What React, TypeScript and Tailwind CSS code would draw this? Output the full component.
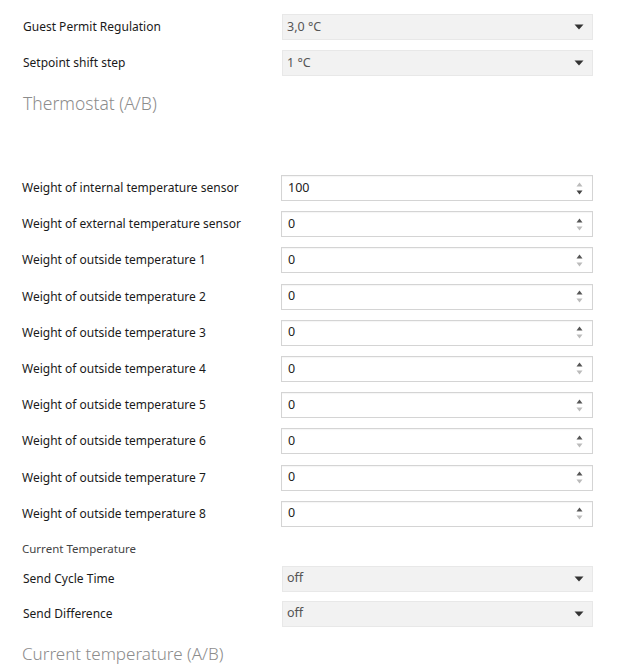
const font = "font-['Segoe_UI','Noto_Sans','Open_Sans',sans-serif]";

const Caret = () => (
  <svg width="10" height="6" viewBox="0 0 10 6" className="shrink-0">
    <path d="M0.5 0.5h9L5 5.5z" fill="#333" />
  </svg>
);

const Spinner = ({ upActive, downActive }: { upActive: boolean; downActive: boolean }) => (
  <div className="flex flex-col items-center gap-[3px]">
    <svg width="7" height="5" viewBox="0 0 7 5">
      <path d="M3.5 0.5L6.5 4.5h-6z" fill={upActive ? "#555" : "#bbb"} />
    </svg>
    <svg width="7" height="5" viewBox="0 0 7 5">
      <path d="M0.5 0.5h6L3.5 4.5z" fill={downActive ? "#444" : "#bbb"} />
    </svg>
  </div>
);

const SelectRow = ({ label, value }: { label: string; value: string }) => (
  <div className="flex items-center">
    <div className="w-[282px] pl-[23px] text-[12px] text-[#1a1a1a]">{label}</div>
    <div className="flex h-[26px] w-[311px] items-center justify-between border border-[#e8e8e8] bg-[#f2f2f2] pl-[4px] pr-[8px] text-[12.5px] text-[#555]">
      <span>{value}</span>
      <Caret />
    </div>
  </div>
);

const NumberRow = ({ label, value }: { label: string; value: string }) => (
  <div className="flex h-[26px] items-center">
    <div className="w-[281px] pl-[22px] text-[12px] text-[#1a1a1a]">{label}</div>
    <div className="flex h-[26px] w-[312px] items-center justify-between border border-[#d4d4d4] bg-white pl-[6px] pr-[9px] text-[12.5px] text-[#222] shadow-[inset_0_1px_1px_rgba(0,0,0,0.04)]">
      <span>{value}</span>
      <Spinner upActive={value !== "100"} downActive={value === "100"} />
    </div>
  </div>
);

const weights = [
  { label: "Weight of internal temperature sensor", value: "100" },
  { label: "Weight of external temperature sensor", value: "0" },
  ...[1, 2, 3, 4, 5, 6, 7, 8].map((n) => ({ label: `Weight of outside temperature ${n}`, value: "0" })),
];

export default function App() {
  return (
    <div className={`h-[666px] w-[623px] overflow-hidden bg-white ${font}`}>
      <div className="flex flex-col gap-[10px] pt-[14px]">
        <SelectRow label="Guest Permit Regulation" value="3,0 °C" />
        <SelectRow label="Setpoint shift step" value="1 °C" />
      </div>
      <h2 className="mt-[15px] pl-[23px] text-[17.5px] leading-[24px] font-light text-[#8c8c8c]">Thermostat (A/B)</h2>

      <div className="mt-[60px] flex flex-col gap-[10.2px]">
        {weights.map((w) => (
          <NumberRow key={w.label} label={w.label} value={w.value} />
        ))}
      </div>

      <div className="mt-[14px] pl-[22px] text-[11.5px] leading-[16px] text-[#444]">Current Temperature</div>
      <div className="mt-[9px] flex flex-col gap-[9px]">
        <SelectRow label="Send Cycle Time" value="off" />
        <SelectRow label="Send Difference" value="off" />
      </div>
      <h2 className="mt-[16px] pl-[22px] text-[17px] leading-[22px] font-light text-[#8c8c8c]">Current temperature (A/B)</h2>
    </div>
  );
}
